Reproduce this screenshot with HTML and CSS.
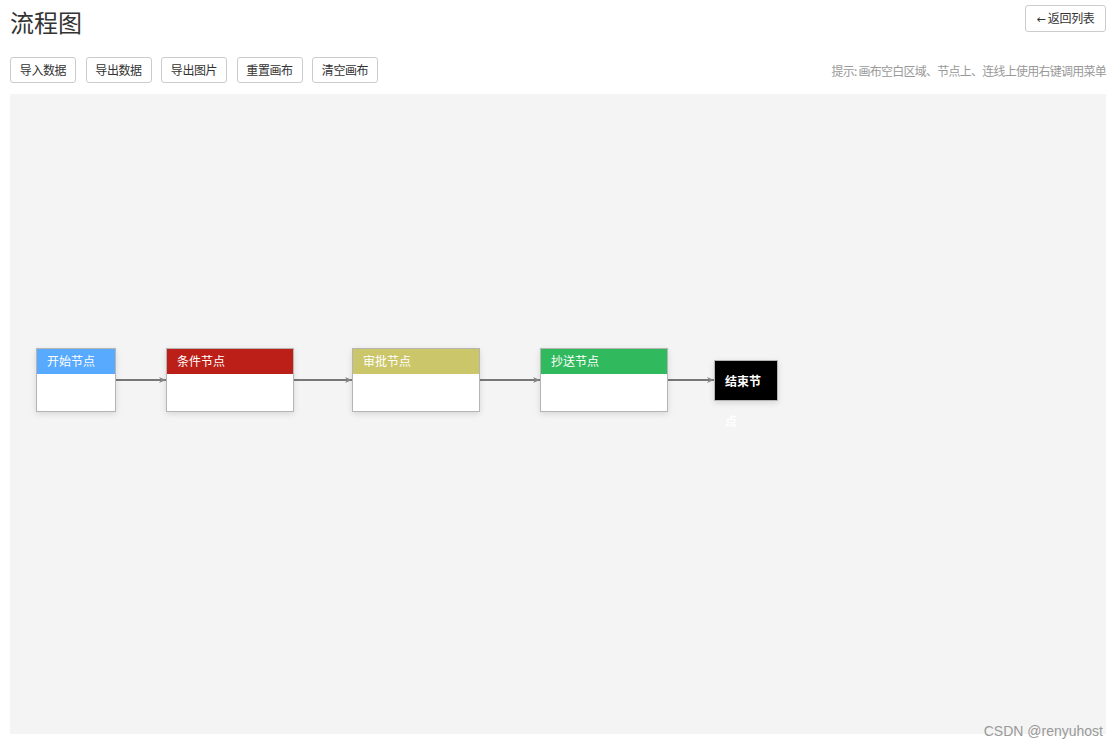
FILE: index.html
```html
<!DOCTYPE html>
<html lang="zh-CN">
<head>
    <meta charset="UTF-8">
    <title>流程图</title>
    <link rel="stylesheet" href="styles.css">
</head>
<body>

<div class="page">
    <div class="page-header">
        <h1>流程图</h1>
        <button class="btn back-btn"><span class="arrow">&larr;</span> 返回列表</button>
    </div>

    <div class="toolbar">
        <div class="actions">
            <button class="btn">导入数据</button>
            <button class="btn">导出数据</button>
            <button class="btn">导出图片</button>
            <button class="btn">重置画布</button>
            <button class="btn">清空画布</button>
        </div>
        <div class="hint">提示: 画布空白区域、节点上、连线上使用右键调用菜单</div>
    </div>

    <div class="canvas">
        <svg class="edges" width="1096" height="640">
            <defs>
                <marker id="arrow" markerWidth="8" markerHeight="8" refX="7" refY="4" orient="auto" markerUnits="userSpaceOnUse">
                    <path d="M0,1 L7,4 L0,7 L2,4 Z" fill="#888"/>
                </marker>
            </defs>
            <line x1="106" y1="286" x2="156" y2="286" marker-end="url(#arrow)"/>
            <line x1="284" y1="286" x2="342" y2="286" marker-end="url(#arrow)"/>
            <line x1="470" y1="286" x2="530" y2="286" marker-end="url(#arrow)"/>
            <line x1="658" y1="286" x2="704" y2="286" marker-end="url(#arrow)"/>
        </svg>

        <div class="node node-start" style="left: 26px; top: 254px;">
            <div class="node-title">开始节点</div>
            <div class="node-body"></div>
        </div>
        <div class="node node-wide node-cond" style="left: 156px; top: 254px;">
            <div class="node-title">条件节点</div>
            <div class="node-body"></div>
        </div>
        <div class="node node-wide node-approve" style="left: 342px; top: 254px;">
            <div class="node-title">审批节点</div>
            <div class="node-body"></div>
        </div>
        <div class="node node-wide node-cc" style="left: 530px; top: 254px;">
            <div class="node-title">抄送节点</div>
            <div class="node-body"></div>
        </div>
        <div class="end-node" style="left: 704px; top: 266px;">结束节点</div>
    </div>
</div>

<div class="watermark">CSDN @renyuhost</div>

</body>
</html>
```

FILE: styles.css
```css
* {
    box-sizing: border-box;
    margin: 0;
    padding: 0;
}

body {
    font-family: "Noto Sans CJK SC", "Liberation Sans", sans-serif;
    font-size: 12px;
    color: #333;
    background: #fff;
}

.page {
    padding: 5px 12px 0 10px;
}

.page-header {
    display: flex;
    justify-content: space-between;
    align-items: flex-start;
    height: 52px;
}

h1 {
    font-size: 24px;
    font-weight: normal;
    line-height: 34px;
    color: #333;
}

.btn {
    height: 26px;
    padding: 0 10px;
    border: 1px solid #ccc;
    border-radius: 3px;
    background: #fff;
    color: #333;
    font-family: inherit;
    font-size: 12px;
    line-height: 24px;
    cursor: pointer;
}

.back-btn {
    height: 27px;
    width: 81px;
    padding: 0;
    letter-spacing: -0.3px;
}

.back-btn .arrow {
    font-family: "DejaVu Sans", sans-serif;
    font-size: 11px;
}

.toolbar {
    display: flex;
    justify-content: space-between;
    align-items: center;
    height: 26px;
}

.actions {
    display: flex;
    gap: 9.5px;
}

.actions .btn {
    width: 66px;
    padding: 0;
    letter-spacing: -0.4px;
}

.hint {
    color: #999;
    font-size: 12px;
    letter-spacing: -0.75px;
}

.canvas {
    position: relative;
    margin-top: 11px;
    width: 1096px;
    height: 640px;
    background: #f4f4f4;
}

.edges {
    position: absolute;
    left: 0;
    top: 0;
}

.edges line {
    stroke: #777;
    stroke-width: 2;
}

.node {
    position: absolute;
    width: 80px;
    height: 64px;
    border: 1px solid #b5b5b5;
    background: #fff;
    box-shadow: 0 2px 6px rgba(0, 0, 0, 0.12);
}

.node-wide {
    width: 128px;
}

.node-title {
    height: 25px;
    line-height: 24px;
    padding-left: 10px;
    color: #fff;
    font-size: 12px;
}

.node-start .node-title { background: #57aafe; }
.node-cond .node-title { background: #bb1f18; }
.node-approve .node-title { background: #cbc66a; }
.node-cc .node-title { background: #31b95e; }

.end-node {
    position: absolute;
    width: 64px;
    height: 41px;
    padding: 0 10px;
    border: 1px solid #b5b5b5;
    background: #000;
    color: #fff;
    font-weight: bold;
    font-size: 12px;
    line-height: 40px;
    box-shadow: 0 2px 6px rgba(0, 0, 0, 0.12);
}

.watermark {
    position: absolute;
    right: 15px;
    top: 723px;
    font-family: "Liberation Sans", sans-serif;
    font-size: 14px;
    color: #999;
}
```
